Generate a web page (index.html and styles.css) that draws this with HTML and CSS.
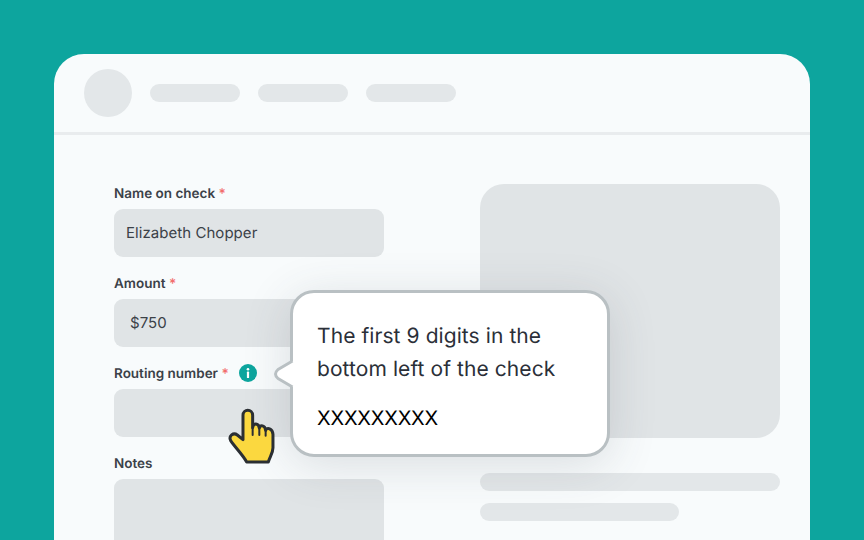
FILE: index.html
```html
<!DOCTYPE html>
<html lang="en">
<head>
<meta charset="utf-8">
<title>Check form</title>
<link rel="stylesheet" href="styles.css">
</head>
<body>
<div class="card">
  <header class="topbar">
    <div class="avatar"></div>
    <div class="pill"></div>
    <div class="pill"></div>
    <div class="pill"></div>
  </header>
  <main class="content">
    <form class="form">
      <div class="field">
        <div class="label">Name on check <span class="req">*</span></div>
        <div class="input">Elizabeth Chopper</div>
      </div>
      <div class="field">
        <div class="label">Amount <span class="req">*</span></div>
        <div class="input input-amount">$750</div>
      </div>
      <div class="field">
        <div class="label">Routing number <span class="req">*</span><svg class="info" viewBox="0 0 18 18" aria-hidden="true">
            <circle cx="9" cy="9" r="9" fill="#0da59e"/>
            <circle cx="9" cy="5.2" r="1.3" fill="#fff"/>
            <rect x="7.9" y="7.6" width="2.2" height="6.4" rx="0.6" fill="#fff"/>
          </svg></div>
        <div class="input"></div>
      </div>
      <div class="field">
        <div class="label">Notes</div>
        <div class="input input-notes"></div>
      </div>
    </form>
    <aside class="side">
      <div class="preview"></div>
      <div class="line"></div>
      <div class="line line-short"></div>
    </aside>
  </main>
</div>
<div class="tooltip">
  <svg class="tail" viewBox="0 0 22 34" aria-hidden="true">
    <path d="M17 4 L19.5 4 L23 4 L23 30 L19.5 30 L5 21.5 Q0 17 5 12.5 L19.5 4 Z" fill="#fff"/>
    <path d="M19.5 4 L5 12.5 Q0 17 5 21.5 L19.5 30" fill="none" stroke="#b9c0c3" stroke-width="3" stroke-linejoin="round"/>
  </svg>
  <p class="tip-text">The first 9 digits in the bottom left of the check</p>
  <p class="tip-code">XXXXXXXXX</p>
</div>
<svg class="hand" viewBox="85 200 145 175" aria-hidden="true">
  <path d="M130 225 C130 205 159 205 159 225 L159 262 C161 247 177 247 179 263 C182 253 196 254 198 270 C202 260 219 264 220 282 L220 322 C220 338 211 348 206 365 L141 365 C128 342 107 322 93 301 C86 287 101 275 113 284 L130 298 Z" fill="#fbd83f" stroke="#2b2f33" stroke-width="9" stroke-linejoin="round"/>
  <path d="M159 262 L159 284 M179 263 L179 284 M198 270 L198 286" fill="none" stroke="#2b2f33" stroke-width="6" stroke-linecap="round"/>
</svg>
</body>
</html>
```
FILE: styles.css
```css
* { box-sizing: border-box; }
html, body { margin: 0; height: 100%; }
body {
  position: relative;
  width: 864px;
  height: 540px;
  overflow: hidden;
  background: #0da59e;
  padding: 54px 54px 0;
  font-family: Inter, "Liberation Sans", sans-serif;
  text-rendering: geometricPrecision;
}
.card {
  background: #f8fbfc;
  border-radius: 30px 30px 0 0;
  height: 486px;
  overflow: hidden;
}
.topbar {
  display: flex;
  align-items: center;
  gap: 18px;
  height: 81px;
  padding: 0 30px;
  border-bottom: 3px solid #e9ecee;
}
.avatar {
  width: 48px;
  height: 48px;
  border-radius: 50%;
  background: #e3e7e9;
}
.pill {
  width: 90px;
  height: 18px;
  border-radius: 9px;
  background: #e3e7e9;
}
.content {
  display: flex;
  padding: 49px 30px 0 60px;
  gap: 96px;
}
.form {
  width: 270px;
  display: flex;
  flex-direction: column;
  gap: 17.5px;
}
.label {
  height: 24.5px;
  line-height: 20px;
  font-size: 13.5px;
  font-weight: 600;
  color: #3b4148;
  white-space: nowrap;
}
.req { color: #f26d6d; }
.info {
  width: 18px;
  height: 18px;
  margin-left: 10px;
  vertical-align: -4px;
}
.input {
  height: 48px;
  border-radius: 9px;
  background: #e0e4e6;
  padding: 0 12px;
  display: flex;
  align-items: center;
  font-size: 15px;
  letter-spacing: 0.05px;
  color: #3b4148;
}
.input-amount { padding-left: 16px; }
.input-notes { height: 96px; }
.side { width: 300px; }
.preview {
  height: 254px;
  border-radius: 24px;
  background: #e0e4e6;
  margin-bottom: 35px;
}
.line {
  height: 18px;
  border-radius: 9px;
  background: #e3e7e9;
  margin-bottom: 12px;
}
.line-short { width: 199px; }
.tooltip {
  position: absolute;
  left: 290px;
  top: 290px;
  width: 320px;
  height: 167px;
  background: #fff;
  border: 3px solid #b9c0c3;
  border-radius: 24px;
  padding: 27px 24px 0;
  box-shadow: 0 8px 48px rgba(60, 70, 80, 0.16);
  color: #2b2f38;
}
.tail {
  position: absolute;
  left: -20px;
  top: 64px;
  width: 22px;
  height: 34px;
  overflow: visible;
}
.tip-text {
  margin: 0;
  font-size: 21px;
  line-height: 33px;
  letter-spacing: 0.08px;
}
.tip-code {
  margin: 16px 0 0;
  font-size: 20px;
  line-height: 33px;
  letter-spacing: -0.2px;
  color: #000;
}
.hand {
  position: absolute;
  left: 228.3px;
  top: 406.7px;
  width: 48.3px;
  height: 58.3px;
}
```
